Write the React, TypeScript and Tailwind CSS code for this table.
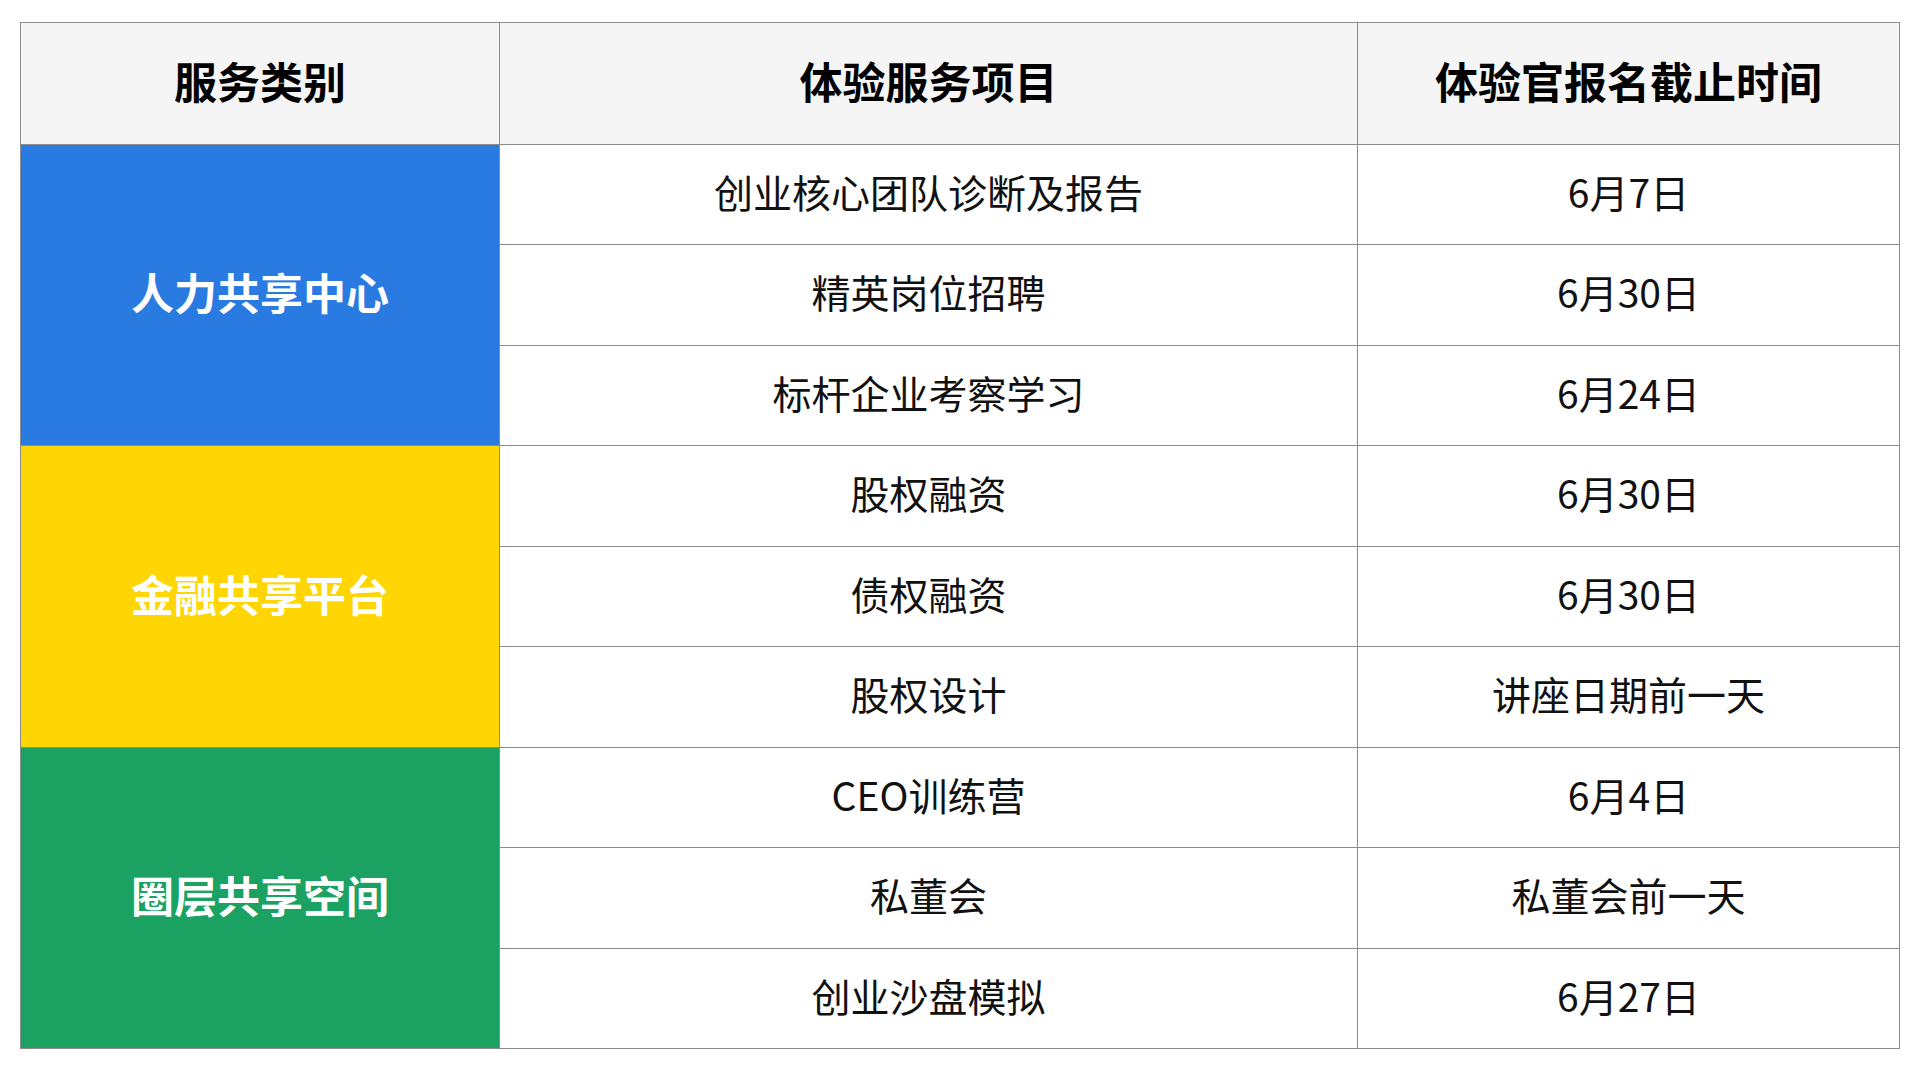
import React from "react";

const rows: { item: string; date: string }[] = [
  { item: "创业核心团队诊断及报告", date: "6月7日" },
  { item: "精英岗位招聘", date: "6月30日" },
  { item: "标杆企业考察学习", date: "6月24日" },
  { item: "股权融资", date: "6月30日" },
  { item: "债权融资", date: "6月30日" },
  { item: "股权设计", date: "讲座日期前一天" },
  { item: "CEO训练营", date: "6月4日" },
  { item: "私董会", date: "私董会前一天" },
  { item: "创业沙盘模拟", date: "6月27日" },
];

const font = { fontFamily: '"Noto Sans CJK SC", "Noto Sans", sans-serif' };

export default function App() {
  return (
    <div className="w-[1920px] h-[1065px] bg-white overflow-hidden" style={font}>
      <div className="ml-[20px] mt-[22px] w-[1880px] h-[1027px] bg-[#8c8c8c] p-px grid gap-px grid-cols-[478px_857px_541px] grid-rows-[121px_repeat(9,1fr)]">
        <div className="bg-[#f5f5f5] flex items-center justify-center pb-[7px] text-[43px] font-bold text-black">服务类别</div>
        <div className="bg-[#f5f5f5] flex items-center justify-center pb-[7px] text-[43px] font-bold text-black">体验服务项目</div>
        <div className="bg-[#f5f5f5] flex items-center justify-center pb-[7px] text-[43px] font-bold text-black">体验官报名截止时间</div>

        <div className="row-start-2 row-span-3 col-start-1 bg-[#2a7be1] flex items-center justify-center pb-[7px] text-[43px] font-bold text-white">人力共享中心</div>
        <div className="row-start-5 row-span-3 col-start-1 bg-[#ffd503] flex items-center justify-center pb-[7px] text-[43px] font-bold text-white">金融共享平台</div>
        <div className="row-start-8 row-span-3 col-start-1 bg-[#1ba262] flex items-center justify-center pb-[7px] text-[43px] font-bold text-white">圈层共享空间</div>

        {rows.map((r, i) => (
          <React.Fragment key={i}>
            <div className="col-start-2 bg-white flex items-center justify-center pb-[7px] text-[39px] text-[#111]">{r.item}</div>
            <div className="col-start-3 bg-white flex items-center justify-center pb-[7px] text-[39px] text-[#111]">{r.date}</div>
          </React.Fragment>
        ))}
      </div>
    </div>
  );
}
